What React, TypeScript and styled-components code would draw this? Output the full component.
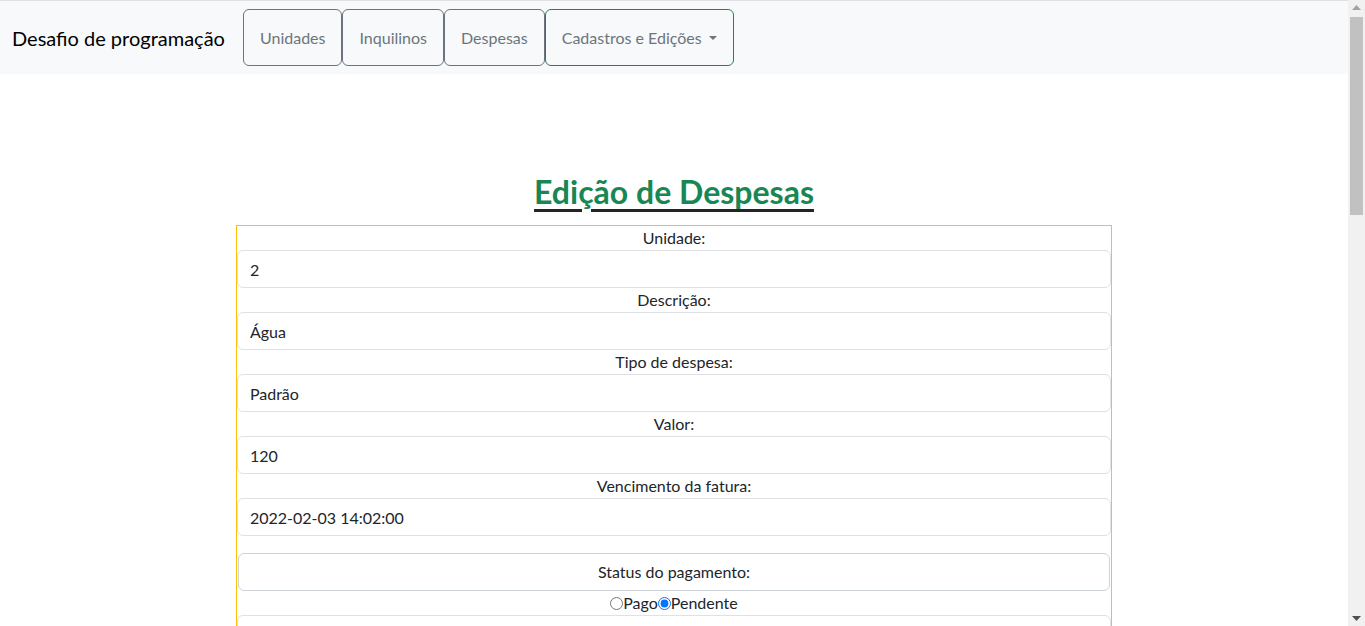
import React from "react";
import styled, { createGlobalStyle } from "styled-components";

const Global = createGlobalStyle`
  html, body { margin: 0; padding: 0; }
  body {
    font-family: "Lato", "Liberation Sans", sans-serif;
    font-size: 16px;
    line-height: 1.5;
    color: #212529;
    background: #fff;
    padding-right: 17px;
  }
  * { box-sizing: border-box; }
`;

const Nav = styled.nav`
  display: flex;
  align-items: center;
  background: #f8f9fa;
  border-top: 1px solid #dee2e6;
  padding: 8px 12px;
`;

const Brand = styled.span`
  font-size: 20px;
  line-height: 30px;
  margin-right: 18px;
  color: #000;
  white-space: nowrap;
`;

const NavButton = styled.button<{ $green?: boolean }>`
  display: inline-flex;
  align-items: center;
  height: 57px;
  padding: 0 16px;
  font-family: inherit;
  font-size: 16px;
  line-height: 24px;
  color: #6c757d;
  background: transparent;
  border: 1px solid ${(p) => (p.$green ? "#198754" : "#6c757d")};
  border-radius: 6px;
  cursor: pointer;
`;

const Caret = styled.span`
  display: inline-block;
  margin-left: 0.45em;
  margin-top: 1px;
  border-top: 0.3em solid #6c757d;
  border-left: 0.3em solid transparent;
  border-right: 0.3em solid transparent;
`;

const Main = styled.main`
  display: flex;
  flex-direction: column;
  align-items: center;
  padding: 99px 0 1300px;
`;

const Title = styled.h2`
  margin: 0 0 14px;
  font-size: 32px;
  line-height: 38px;
  font-weight: 700;
  color: #198754;
  text-decoration: underline;
  text-decoration-color: #212529;
  text-decoration-thickness: 3px;
  text-underline-offset: 5px;
`;

const FormBox = styled.form`
  width: 65%;
  border: 1px solid #ffc107;
  display: flex;
  flex-direction: column;
`;

const Label = styled.label`
  display: block;
  text-align: center;
  font-size: 16px;
  line-height: 24px;
`;

const Input = styled.input`
  display: block;
  width: 100%;
  height: 38px;
  padding: 6px 12px;
  font-family: inherit;
  font-size: 16px;
  line-height: 24px;
  color: #212529;
  background: #fff;
  border: 1px solid #dee2e6;
  border-radius: 6px;
  outline: none;
`;

const StatusBox = styled.div`
  margin: 17px 1px 0;
  height: 38px;
  display: flex;
  align-items: center;
  justify-content: center;
  font-size: 16px;
  border: 1px solid #ced4da;
  border-radius: 6px;
`;

const RadioRow = styled.div`
  display: flex;
  justify-content: center;
  align-items: center;
  height: 24px;
  font-size: 16px;
`;

const Radio = styled.input`
  margin: 0;
  width: 13px;
  height: 13px;
`;

const ScrollTrack = styled.div`
  position: fixed;
  top: 0;
  right: 0;
  width: 17px;
  height: 100vh;
  background: #f1f1f1;
  display: flex;
  flex-direction: column;
  align-items: center;
  justify-content: space-between;
`;

const Thumb = styled.div`
  position: absolute;
  top: 17px;
  left: 2px;
  width: 13px;
  height: 198px;
  background: #c1c1c1;
`;

const Arrow = styled.svg`
  display: block;
  margin: 5px 0;
`;

const fields: [string, string][] = [
  ["Unidade:", "2"],
  ["Descrição:", "Água"],
  ["Tipo de despesa:", "Padrão"],
  ["Valor:", "120"],
  ["Vencimento da fatura:", "2022-02-03 14:02:00"],
];

export default function App() {
  return (
    <>
      <Global />
      <Nav>
        <Brand>Desafio de programação</Brand>
        <NavButton>Unidades</NavButton>
        <NavButton>Inquilinos</NavButton>
        <NavButton>Despesas</NavButton>
        <NavButton $green>
          Cadastros e Edições
          <Caret />
        </NavButton>
      </Nav>
      <Main>
        <Title>Edição de Despesas</Title>
        <FormBox>
          {fields.map(([label, value]) => (
            <React.Fragment key={label}>
              <Label>{label}</Label>
              <Input defaultValue={value} />
            </React.Fragment>
          ))}
          <StatusBox>Status do pagamento:</StatusBox>
          <RadioRow>
            <Radio type="radio" name="status" />
            Pago
            <Radio type="radio" name="status" defaultChecked />
            Pendente
          </RadioRow>
          <Input defaultValue="" />
        </FormBox>
      </Main>
      <ScrollTrack>
        <Arrow width="9" height="5" viewBox="0 0 9 5">
          <path d="M4.5 0L9 5H0z" fill="#a3a3a3" />
        </Arrow>
        <Thumb />
        <Arrow width="9" height="5" viewBox="0 0 9 5">
          <path d="M0 0h9L4.5 5z" fill="#505050" />
        </Arrow>
      </ScrollTrack>
    </>
  );
}
